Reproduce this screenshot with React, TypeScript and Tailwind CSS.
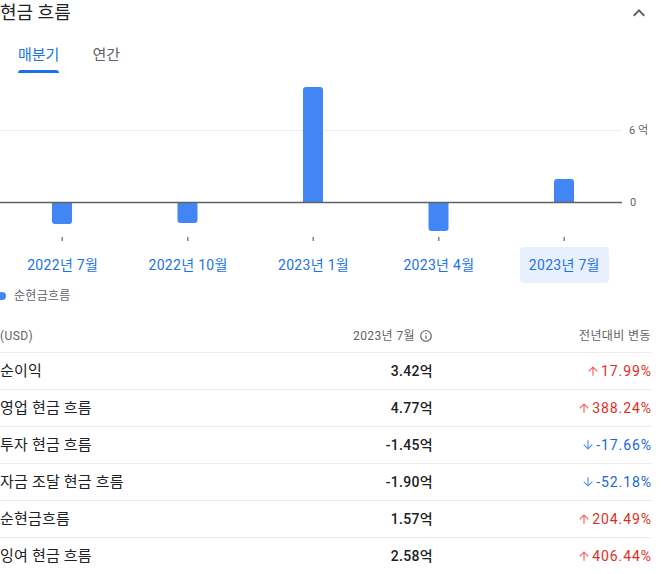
import React from "react";

const centers = [62, 187.5, 313, 438.5, 564];
const bars = [-22, -21, 115, -29, 23];
const BASE = 129;

function barPath(cx: number, h: number) {
  const w = 20;
  const x0 = cx - w / 2;
  const x1 = cx + w / 2;
  const r = 3;
  if (h > 0) {
    const top = BASE - h;
    return `M${x0} ${BASE} L${x0} ${top + r} Q${x0} ${top} ${x0 + r} ${top} L${x1 - r} ${top} Q${x1} ${top} ${x1} ${top + r} L${x1} ${BASE} Z`;
  }
  const bot = BASE - h;
  return `M${x0} ${BASE} L${x0} ${bot - r} Q${x0} ${bot} ${x0 + r} ${bot} L${x1 - r} ${bot} Q${x1} ${bot} ${x1} ${bot - r} L${x1} ${BASE} Z`;
}

const labels = ["2022년 7월", "2022년 10월", "2023년 1월", "2023년 4월", "2023년 7월"];

const rows: { name: string; value: string; change: string; up: boolean }[] = [
  { name: "순이익", value: "3.42억", change: "17.99%", up: true },
  { name: "영업 현금 흐름", value: "4.77억", change: "388.24%", up: true },
  { name: "투자 현금 흐름", value: "-1.45억", change: "-17.66%", up: false },
  { name: "자금 조달 현금 흐름", value: "-1.90억", change: "-52.18%", up: false },
  { name: "순현금흐름", value: "1.57억", change: "204.49%", up: true },
  { name: "잉여 현금 흐름", value: "2.58억", change: "406.44%", up: true },
];

function UpArrow() {
  return (
    <svg width="14" height="14" viewBox="0 0 24 24" className="shrink-0">
      <path fill="#ee675c" d="M4 12l1.41 1.41L11 7.83V20h2V7.83l5.58 5.59L20 12l-8-8-8 8z" />
    </svg>
  );
}

function DownArrow() {
  return (
    <svg width="14" height="14" viewBox="0 0 24 24" className="shrink-0">
      <path fill="#5b94ee" d="M20 12l-1.41-1.41L13 16.17V4h-2v12.17l-5.58-5.59L4 12l8 8 8-8z" />
    </svg>
  );
}

export default function App() {
  return (
    <div className="w-[661px] h-[574px] overflow-hidden bg-white font-['Roboto','Noto_Sans_CJK_KR',sans-serif] text-[#202124]">
      <div className="w-[651px]">
        {/* Header */}
        <div className="flex h-[26px] items-center justify-between">
          <div className="text-[18px] leading-[26px] text-[#202124]">현금 흐름</div>
          <svg width="24" height="24" viewBox="0 0 24 24" className="-mt-[1px]">
            <path fill="#5f6368" d="M12 8l-6 6 1.41 1.41L12 10.83l4.59 4.58L18 14z" />
          </svg>
        </div>

        {/* Tabs */}
        <div className="mt-[19px] flex pl-[18px] gap-[33px]">
          <div className="flex flex-col items-stretch">
            <div className="text-[15px] leading-[20px] text-[#1a73e8]">매분기</div>
            <div className="mt-[5px] h-[3px] rounded-t-[3px] bg-[#1a73e8]" />
          </div>
          <div className="flex flex-col">
            <div className="text-[15px] leading-[20px] text-[#5f6368]">연간</div>
          </div>
        </div>

        {/* Chart */}
        <svg width="651" height="174" className="block">
          <line x1="0" y1="57.5" x2="622" y2="57.5" stroke="#eceff1" strokeWidth="1" />
          <text x="629" y="61" fontSize="11" fill="#5f6368" fontFamily="Roboto, 'Noto Sans CJK KR', sans-serif">6 억</text>
          {centers.map((c, i) => (
            <path key={i} d={barPath(c, bars[i])} fill="#4285f4" />
          ))}
          <line x1="0" y1="129.5" x2="622" y2="129.5" stroke="#616161" strokeWidth="1.5" />
          <text x="630" y="133" fontSize="11" fill="#5f6368" fontFamily="Roboto, 'Noto Sans CJK KR', sans-serif">0</text>
          {centers.map((c, i) => (
            <rect key={i} x={c - 0.5} y="164" width="1.5" height="4" fill="#80868b" />
          ))}
        </svg>

        {/* X labels */}
        <div className="grid w-[627px] grid-cols-5">
          {labels.map((l, i) => (
            <div key={i} className="flex justify-center">
              <div
                className={
                  i === 4
                    ? "h-[36px] rounded-[4px] bg-[#e8f0fe] px-[9px] text-[14px] leading-[36px] text-[#1a73e8] tracking-[0.3px] whitespace-nowrap"
                    : "h-[36px] px-[9px] text-[14px] leading-[36px] text-[#1a73e8] tracking-[0.3px] whitespace-nowrap"
                }
              >
                {l}
              </div>
            </div>
          ))}
        </div>

        {/* Legend */}
        <div className="mt-[5px] flex h-[16px] items-center">
          <div className="h-[8px] w-[8px] -ml-[2px] rounded-full bg-[#4285f4]" />
          <div className="ml-[8px] text-[12px] leading-[16px] text-[#5f6368] tracking-[0.3px]">순현금흐름</div>
        </div>

        {/* Table header */}
        <div className="mt-[16px] flex h-[33px] items-center border-b border-[#e8eaed] text-[12px] text-[#5f6368] tracking-[0.4px]">
          <div className="flex-1">(USD)</div>
          <div className="flex w-[200px] items-center justify-end gap-[4px]">
            <span>2023년 7월</span>
            <svg width="14" height="14" viewBox="0 0 24 24">
              <path
                fill="#5f6368"
                d="M11 7h2v2h-2zm0 4h2v6h-2zm1-9C6.48 2 2 6.48 2 12s4.48 10 10 10 10-4.48 10-10S17.52 2 12 2zm0 18c-4.41 0-8-3.59-8-8s3.59-8 8-8 8 3.59 8 8-3.59 8-8 8z"
              />
            </svg>
          </div>
          <div className="w-[218px] text-right">전년대비 변동</div>
        </div>

        {/* Rows */}
        {rows.map((r, i) => (
          <div key={i} className="flex h-[37px] items-center border-b border-[#e8eaed]">
            <div className="flex-1 text-[15px] text-[#202124] tracking-[0.2px]">{r.name}</div>
            <div className="w-[200px] text-right text-[14px] font-medium text-[#202124] tracking-[0.3px]">{r.value}</div>
            <div
              className={
                r.up
                  ? "flex w-[218px] items-center justify-end text-[14px] text-[#d93025] tracking-[0.9px]"
                  : "flex w-[218px] items-center justify-end text-[14px] text-[#1967d2] tracking-[0.9px]"
              }
            >
              {r.up ? <UpArrow /> : <DownArrow />}
              <span className="ml-[1px] -mr-[0.9px]">{r.change}</span>
            </div>
          </div>
        ))}
      </div>
    </div>
  );
}
